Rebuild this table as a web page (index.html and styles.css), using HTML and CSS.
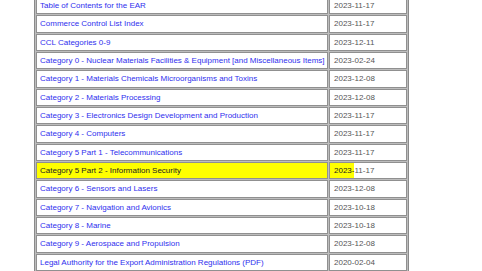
FILE: index.html
```html
<!DOCTYPE html>
<html lang="en">
<head>
<meta charset="utf-8">
<title>EAR Downloads</title>
<link rel="stylesheet" href="styles.css">
</head>
<body>
<table class="docs">
  <colgroup><col class="c-title"><col class="c-date"></colgroup>
  <tbody>
    <tr><td><a href="#">Table of Contents for the EAR</a></td><td class="date">2023-11-17</td></tr>
    <tr><td><a href="#">Commerce Control List Index</a></td><td class="date">2023-11-17</td></tr>
    <tr><td><a href="#">CCL Categories 0-9</a></td><td class="date">2023-12-11</td></tr>
    <tr><td><a href="#">Category 0 - Nuclear Materials Facilities &amp; Equipment [and Miscellaneous Items]</a></td><td class="date">2023-02-24</td></tr>
    <tr><td><a href="#">Category 1 - Materials Chemicals Microorganisms and Toxins</a></td><td class="date">2023-12-08</td></tr>
    <tr><td><a href="#">Category 2 - Materials Processing</a></td><td class="date">2023-12-08</td></tr>
    <tr><td><a href="#">Category 3 - Electronics Design Development and Production</a></td><td class="date">2023-11-17</td></tr>
    <tr><td><a href="#">Category 4 - Computers</a></td><td class="date">2023-11-17</td></tr>
    <tr><td><a href="#">Category 5 Part 1 - Telecommunications</a></td><td class="date">2023-11-17</td></tr>
    <tr class="marked"><td class="hl"><a href="#">Category 5 Part 2 - Information Security</a></td><td class="date"><span class="hl-part">2023-</span>11-17</td></tr>
    <tr><td><a href="#">Category 6 - Sensors and Lasers</a></td><td class="date">2023-12-08</td></tr>
    <tr><td><a href="#">Category 7 - Navigation and Avionics</a></td><td class="date">2023-10-18</td></tr>
    <tr><td><a href="#">Category 8 - Marine</a></td><td class="date">2023-10-18</td></tr>
    <tr><td><a href="#">Category 9 - Aerospace and Propulsion</a></td><td class="date">2023-12-08</td></tr>
    <tr><td><a href="#">Legal Authority for the Export Administration Regulations (PDF)</a></td><td class="date">2020-02-04</td></tr>
  </tbody>
</table>
</body>
</html>
```
FILE: styles.css
```css
html, body {
  margin: 0;
  padding: 0;
  background: #ffffff;
}

body {
  font-family: "Liberation Sans", Arial, sans-serif;
  font-size: 8px;
  overflow: hidden;
}

.docs {
  margin: -5px 0 0 34px;
  width: 373px;
  table-layout: fixed;
  border-collapse: separate;
  border-spacing: 1px;
  border: 1px solid #8a8a8a;
  background: #bdbdbd;
}

.c-title { width: 292px; }
.c-date { width: 78px; }

.docs td {
  background: #ffffff;
  border: 1px solid #909090;
  padding: 0 3px;
  line-height: 15.33px;
  white-space: nowrap;
  overflow: hidden;
}

.docs a {
  color: #2f2fee;
  text-decoration: none;
}

.docs td.date {
  color: #555555;
  padding-left: 4px;
}

.docs td.hl {
  background: #ffff00;
}

.marked a {
  color: #222222;
}

.hl-part {
  display: inline-block;
  background: #ffff00;
  color: #222222;
  margin-left: -4px;
  padding-left: 4px;
  line-height: 15.33px;
}
```
